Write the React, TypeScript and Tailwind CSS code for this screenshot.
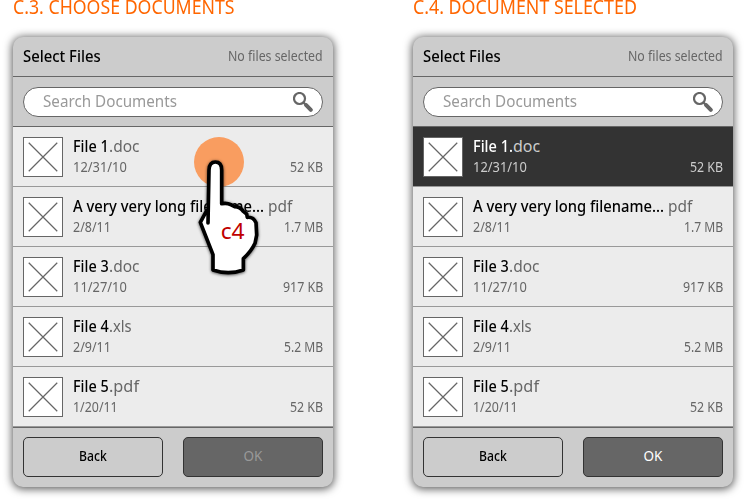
import { useLayoutEffect, useRef, type ReactNode } from "react";

/** A single line of text condensed or widened to an exact advance width. */
function Fit({ w, className = "", children }: { w: number; className?: string; children: ReactNode }) {
  const ref = useRef<HTMLSpanElement>(null);
  useLayoutEffect(() => {
    const el = ref.current;
    if (el) el.style.transform = `scaleX(${w / el.offsetWidth})`;
  }, [w]);
  return (
    <span className={`block ${className}`} style={{ width: w }}>
      <span ref={ref} className="inline-block origin-left whitespace-pre align-top">
        {children}
      </span>
    </span>
  );
}

type File = { name: string; nameW: number; ext: string; extW: number; date: string; dateW: number; size: string; sizeW: number };

const files: File[] = [
  { name: "File 1", nameW: 36, ext: ".doc", extW: 31, date: "12/31/10", dateW: 53.5, size: "52 KB", sizeW: 33 },
  { name: "A very very long filename...", nameW: 191, ext: " pdf", extW: 28, date: "2/8/11", dateW: 38, size: "1.7 MB", sizeW: 39.5 },
  { name: "File 3", nameW: 36, ext: ".doc", extW: 31, date: "11/27/10", dateW: 53.5, size: "917 KB", sizeW: 40.5 },
  { name: "File 4", nameW: 36, ext: ".xls", extW: 23, date: "2/9/11", dateW: 38, size: "5.2 MB", sizeW: 39.5 },
  { name: "File 5", nameW: 36, ext: ".pdf", extW: 29.5, date: "1/20/11", dateW: 45, size: "52 KB", sizeW: 33 },
];

function Row({ file, selected }: { file: File; selected: boolean }) {
  const muted = selected ? "text-[#ccc]" : "text-[#666]";
  const dotted = selected && file.ext.startsWith(".");
  return (
    <li className={`flex h-[60px] border-b border-[#999] px-2.5 pt-2.5 ${selected ? "bg-[#333]" : "bg-[#ececec]"}`}>
      <svg viewBox="0 0 40 40" className="size-10 shrink-0 border border-[#666] bg-white">
        <path d="M5 5L35 35M35 5L5 35" stroke="#666" strokeWidth="1.3" />
      </svg>
      <div className="-mt-px ml-2.5 flex-1">
        <div className="flex text-[16px] leading-5">
          <Fit w={dotted ? file.nameW + 4 : file.nameW} className={`font-medium ${selected ? "text-white" : "text-black"}`}>
            {file.name + (dotted ? "." : "")}
          </Fit>
          <Fit w={dotted ? file.extW - 4 : file.extW} className={muted}>
            {dotted ? file.ext.slice(1) : file.ext}
          </Fit>
        </div>
        <div className={`mt-[3px] flex justify-between text-[13.5px] leading-4 ${muted}`}>
          <Fit w={file.dateW}>{file.date}</Fit>
          <Fit w={file.sizeW}>{file.size}</Fit>
        </div>
      </div>
    </li>
  );
}

function Panel({ title, titleW, selected }: { title: string; titleW: number; selected?: boolean }) {
  return (
    <section className="w-80">
      <h1 className="h-[37px] text-[19px] leading-[14px] text-[#ff6600]">
        <Fit w={titleW}>{title}</Fit>
      </h1>
      <div className="h-[450px] overflow-hidden rounded-[10px] bg-[#ccc] shadow-[0_1px_8px_1px_rgba(0,0,0,0.65)]">
        <header className="flex h-10 justify-between border-b border-[#666] px-2.5">
          <Fit w={78} className="mt-[9px] text-[16px] leading-5 font-medium text-black">Select Files</Fit>
          <Fit w={95} className="mt-[11px] text-[13.5px] leading-4 text-[#666]">No files selected</Fit>
        </header>
        <div className="h-[50px] border-b border-[#666] px-2.5 pt-2.5">
          <div className="flex h-[30px] justify-between rounded-full border border-[#666] bg-white pr-[9px] pl-[19px]">
            <Fit w={134} className="mt-[3px] text-[16px] leading-5 text-[#999]">Search Documents</Fit>
            <svg viewBox="0 0 20 20" className="mt-[4px] size-5" fill="none" stroke="#666">
              <circle cx="6.5" cy="6.5" r="5.5" strokeWidth="2.2" />
              <path d="M10.5 10.5L13 13" strokeWidth="2.4" />
              <path d="M13.2 13.2L17.8 17.8" strokeWidth="4" strokeLinecap="round" />
            </svg>
          </div>
        </div>
        <ul>
          {files.map((f, i) => (
            <Row key={f.name} file={f} selected={!!selected && i === 0} />
          ))}
        </ul>
        <footer className="flex justify-between border-t border-[#666] px-2.5 pt-[9px] text-[13.5px] leading-4">
          <button className="flex h-10 w-[140px] justify-center rounded-[5px] border border-[#333] pt-[10px] font-medium text-black">
            <Fit w={28}>Back</Fit>
          </button>
          <button className={`flex h-10 w-[140px] justify-center rounded-[5px] border border-[#333] bg-[#666] pt-[10px] ${selected ? "text-white" : "text-[#999]"}`}>
            <Fit w={19}>OK</Fit>
          </button>
        </footer>
      </div>
    </section>
  );
}

function TapHand() {
  return (
    <svg viewBox="0 0 540 510" className="absolute top-[120px] left-[180px] h-[170px] w-[180px]">
      <circle cx="117" cy="126" r="75" fill="#f99d60" />
      <path
        d="M84 309L87 150Q88 126 106 126Q125 126 125 150L125 251Q142 248 152 254L164 260Q180 260 190 274L200 282L202 292Q220 290 228 308L230 345L225 370Q214 394 190 416L190 450Q145 466 99 450L99 404L61 307L80 272"
        fill="#fff" stroke="#000" strokeWidth="11" strokeLinejoin="round" strokeLinecap="round"
        className="drop-shadow-[0_2px_4px_rgba(0,0,0,0.7)]"
      />
      <text x="122" y="357" fontSize="66" fill="#c00000" textLength="72" lengthAdjust="spacingAndGlyphs">c4</text>
    </svg>
  );
}

export default function App() {
  return (
    <main className="relative flex h-[500px] w-[746px] gap-20 overflow-hidden bg-white pl-[13px] font-['Noto_Sans','Open_Sans',sans-serif]">
      <Panel title="C.3. CHOOSE DOCUMENTS" titleW={222} />
      <Panel title="C.4. DOCUMENT SELECTED" titleW={224} selected />
      <TapHand />
    </main>
  );
}
